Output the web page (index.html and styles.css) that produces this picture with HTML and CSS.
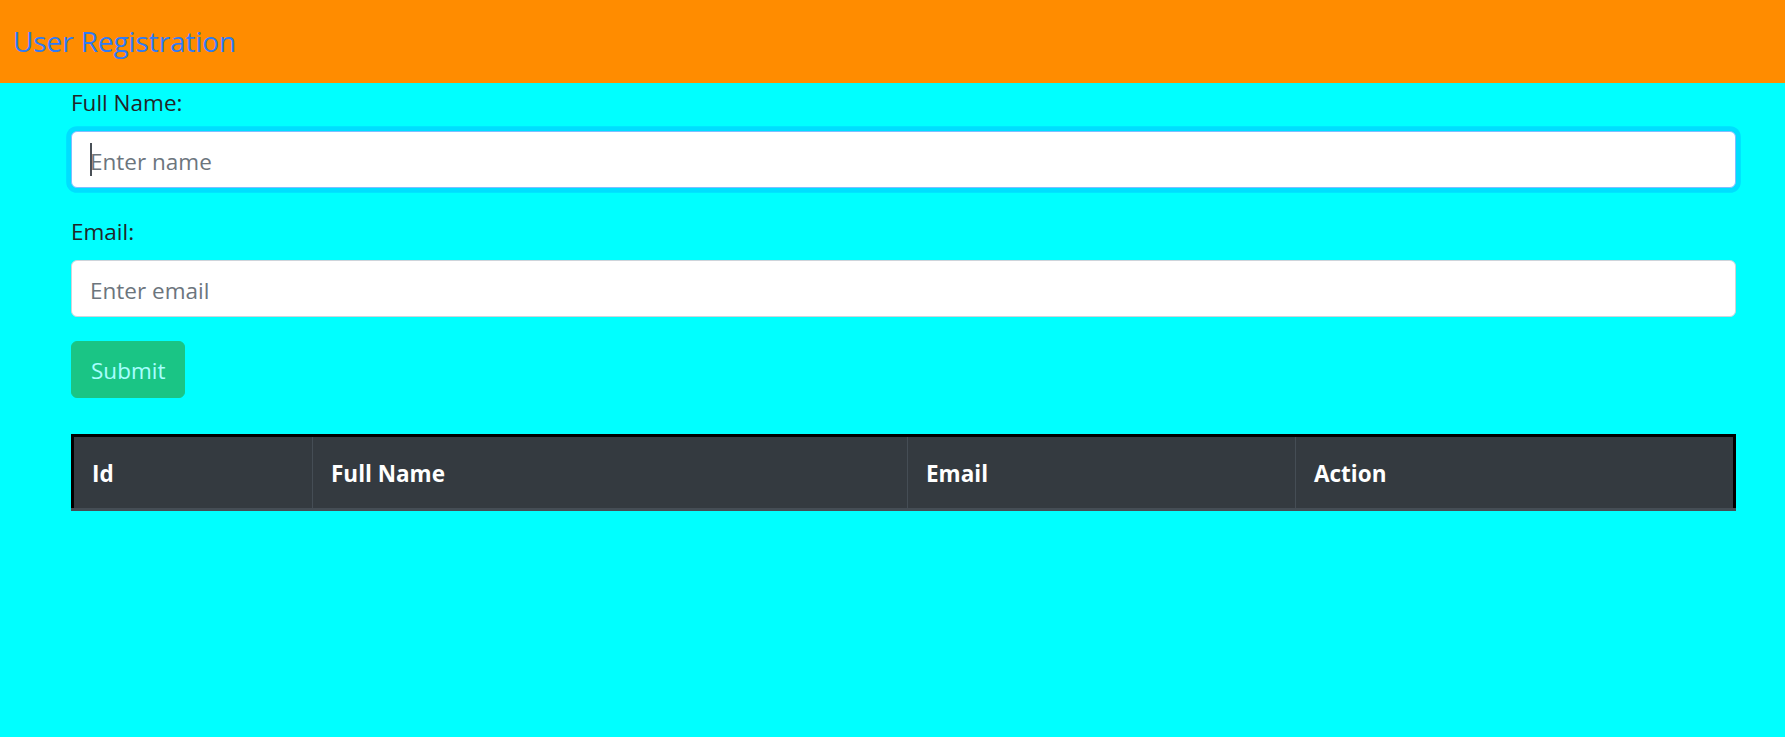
FILE: index.html
```html
<!DOCTYPE html>
<html lang="en">
<head>
<meta charset="utf-8">
<title>User Registration</title>
<link rel="stylesheet" href="styles.css">
</head>
<body>
<nav class="navbar">
  <a class="brand" href="#">User Registration</a>
</nav>
<main class="container">
  <form class="form">
    <div class="form-group">
      <label class="label" for="name">Full Name:</label>
      <div class="field">
        <input class="input focused" id="name" type="text" placeholder="Enter name">
        <span class="caret"></span>
      </div>
    </div>
    <div class="form-group">
      <label class="label" for="email">Email:</label>
      <div class="field">
        <input class="input" id="email" type="email" placeholder="Enter email">
      </div>
    </div>
    <button class="btn" type="submit" disabled>Submit</button>
  </form>
  <div class="table-wrap">
    <table class="table">
      <thead>
        <tr>
          <th class="col-id">Id</th>
          <th class="col-name">Full Name</th>
          <th class="col-email">Email</th>
          <th class="col-action">Action</th>
        </tr>
      </thead>
      <tbody></tbody>
    </table>
  </div>
</main>
</body>
</html>
```
FILE: styles.css
```css
* { box-sizing: border-box; }
html, body { margin: 0; padding: 0; }
body {
  background: #00ffff;
  font-family: "Open Sans", "Noto Sans", "Liberation Sans", sans-serif;
  font-size: 24px;
  line-height: 1.5;
  color: #212529;
  min-height: 737px;
}
.navbar {
  background: #ff8c00;
  height: 83px;
  display: flex;
  align-items: center;
  padding-left: 13px;
}
.brand {
  color: #2f7bf5;
  text-decoration: none;
  font-size: 28px;
  line-height: 1.5;
  letter-spacing: -0.1px;
  padding-bottom: 2px;
}
.container {
  padding: 0 49px 0 71px;
}
.form { display: flex; flex-direction: column; align-items: flex-start; }
.form-group { width: 100%; margin-bottom: 24px; }
.label {
  display: block;
  margin-bottom: 10px;
  padding-top: 2px;
  font-size: 22.5px;
  line-height: 36px;
}
.field { position: relative; }
.input {
  display: block;
  width: 100%;
  height: 57px;
  padding: 11px 18px 7px;
  font-family: inherit;
  font-size: 22.5px;
  line-height: 36px;
  color: #495057;
  background: #fff;
  border: 1.5px solid #ced4da;
  border-radius: 6px;
  outline: none;
}
.input::placeholder { color: #6c757d; opacity: 1; }
.input.focused {
  border-color: #80bdff;
  box-shadow: 0 0 0 4.8px rgba(0, 123, 255, 0.25);
}
.caret {
  position: absolute;
  left: 19px;
  top: 12px;
  width: 2px;
  height: 33px;
  background: #495057;
}
.btn {
  height: 57px;
  padding: 10px 19px 8px;
  font-family: inherit;
  font-size: 22.5px;
  line-height: 36px;
  color: #fff;
  background: #28a745;
  border: 1.5px solid #28a745;
  border-radius: 6px;
  opacity: 0.65;
}
.table-wrap {
  margin-top: 36px;
  border-bottom: 3px solid #454d55;
}
.table {
  width: 100%;
  border-collapse: collapse;
  border: 3px solid #000;
  border-bottom: none;
}
.table th {
  background: #343a40;
  color: #fff;
  font-weight: 700;
  font-size: 22.5px;
  text-align: left;
  height: 72px;
  padding: 4px 18px 0;
  line-height: 36px;
  border-left: 1px solid #454d55;
}
.table th:first-child { border-left: none; }
.col-id { width: 240px; }
.col-name { width: 595px; }
.col-email { width: 388px; }
```
